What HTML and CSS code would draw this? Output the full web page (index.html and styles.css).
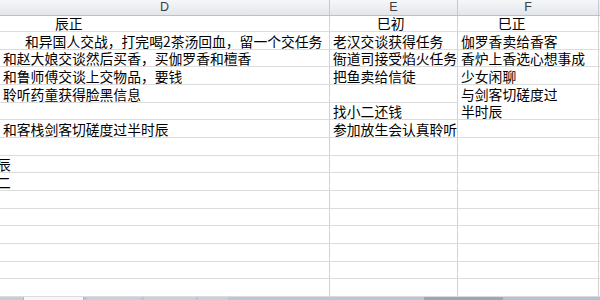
FILE: index.html
```html
<!DOCTYPE html>
<html lang="zh">
<head>
<meta charset="utf-8">
<link rel="stylesheet" href="styles.css">
</head>
<body>
<div class="sheet">
  <div class="row head">
    <div class="hc">D</div><div class="hc">E</div><div class="hc">F</div><div class="hc last"></div>
  </div>
  <div class="row h16">
    <div class="c pl-d1">辰正</div><div class="c pl-e1">巳初</div><div class="c pl-f1">巳正</div><div class="c last"></div>
  </div>
  <div class="row h18">
    <div class="c pl-d2">和异国人交战，打完喝2茶汤回血，留一个交任务</div><div class="c">老汉交谈获得任务</div><div class="c">伽罗香卖给香客</div><div class="c last"></div>
  </div>
  <div class="row h17">
    <div class="c">和赵大娘交谈然后买香，买伽罗香和檀香</div><div class="c">衙道司接受焰火任务</div><div class="c">香炉上香选心想事成</div><div class="c last"></div>
  </div>
  <div class="row h18">
    <div class="c">和鲁师傅交谈上交物品，要钱</div><div class="c">把鱼卖给信徒</div><div class="c">少女闲聊</div><div class="c last"></div>
  </div>
  <div class="row h18">
    <div class="c">聆听药童获得脸黑信息</div><div class="c"></div><div class="c nob">与剑客切磋度过</div><div class="c last"></div>
  </div>
  <div class="row h17">
    <div class="c"></div><div class="c">找小二还钱</div><div class="c">半时辰</div><div class="c last"></div>
  </div>
  <div class="row h18">
    <div class="c">和客栈剑客切磋度过半时辰</div><div class="c">参加放生会认真聆听</div><div class="c"></div><div class="c last"></div>
  </div>
  <div class="row h18">
    <div class="c"></div><div class="c"></div><div class="c"></div><div class="c last"></div>
  </div>
  <div class="row h17">
    <div class="c clip"><span class="spill">辰</span></div><div class="c"></div><div class="c"></div><div class="c last"></div>
  </div>
  <div class="row h18">
    <div class="c clip"><span class="spill">二</span></div><div class="c"></div><div class="c"></div><div class="c last"></div>
  </div>
  <div class="row h18">
    <div class="c"></div><div class="c"></div><div class="c"></div><div class="c last"></div>
  </div>
  <div class="row h17">
    <div class="c"></div><div class="c"></div><div class="c"></div><div class="c last"></div>
  </div>
  <div class="row h18">
    <div class="c"></div><div class="c"></div><div class="c"></div><div class="c last"></div>
  </div>
  <div class="row h18">
    <div class="c"></div><div class="c"></div><div class="c"></div><div class="c last"></div>
  </div>
  <div class="row h17">
    <div class="c"></div><div class="c"></div><div class="c"></div><div class="c last"></div>
  </div>
  <div class="row h18">
    <div class="c"></div><div class="c"></div><div class="c"></div><div class="c last"></div>
  </div>
  <div class="tabs">
    <div class="seg s1"></div>
    <div class="seg s2"></div>
    <div class="seg s3"></div>
    <div class="seg s4"></div>
    <div class="seg s5"></div>
    <div class="seg s6"></div>
    <div class="seg s7"></div>
    <div class="seg s8"></div>
  </div>
</div>
</body>
</html>
```
FILE: styles.css
```css
html, body {
  margin: 0;
  padding: 0;
  background: #ffffff;
  overflow: hidden;
}
.sheet {
  width: 600px;
  height: 300px;
  display: flex;
  flex-direction: column;
  font-family: "Noto Sans CJK SC", "Microsoft YaHei", sans-serif;
  font-size: 13.8px;
  color: #000000;
}
.row {
  display: grid;
  grid-template-columns: 330px 128px 141px 1fr;
  flex: none;
}
.head {
  height: 16px;
  background: linear-gradient(#f6f7f9, #e3e6ea);
  border-bottom: 1px solid #b9c2cc;
  box-sizing: border-box;
}
.hc {
  border-right: 1px solid #c3cad3;
  text-align: center;
  font-family: "Liberation Sans", Arial, sans-serif;
  font-size: 12.5px;
  line-height: 15px;
  color: #3a3f46;
}
.h16 { height: 16px; }
.h17 { height: 17px; }
.h18 { height: 18px; }
.c {
  box-sizing: border-box;
  border-right: 1px solid #d2d2d2;
  border-bottom: 1px solid #dcdcdc;
  padding-left: 3px;
  white-space: nowrap;
  display: flex;
  align-items: flex-end;
  line-height: 16px;
}
.h16 .c { line-height: 15px; }
.last { border-right: none; }
.nob { border-bottom-color: transparent; }
.pl-d1 { padding-left: 55px; }
.pl-e1 { padding-left: 47px; }
.pl-f1 { padding-left: 40px; }
.pl-d2 { padding-left: 25px; }
.clip { overflow: hidden; padding-left: 0; }
.spill { margin-left: -3px; }
.tabs {
  height: 3px;
  display: flex;
  flex: none;
  background: #b8c6d8;
}
.seg { height: 3px; }
.s1 { width: 23px; background: #c7cdd6; }
.s2 { width: 59px; background: #f4f6f9; border-left: 1px solid #aeb7c2; border-right: 1px solid #aeb7c2; }
.s3 { width: 54px; margin-left: 3px; background: #c9d0da; }
.s4 { width: 52px; margin-left: 3px; background: #c9d0da; }
.s5 { width: 30px; margin-left: 2px; background: #c9d0da; }
.s6 { width: 194px; margin-left: 2px; background: #b9c7d9; }
.s7 { width: 79px; background: #9ba7b6; }
.s8 { flex: 1; background: #b4c2d4; }
```
